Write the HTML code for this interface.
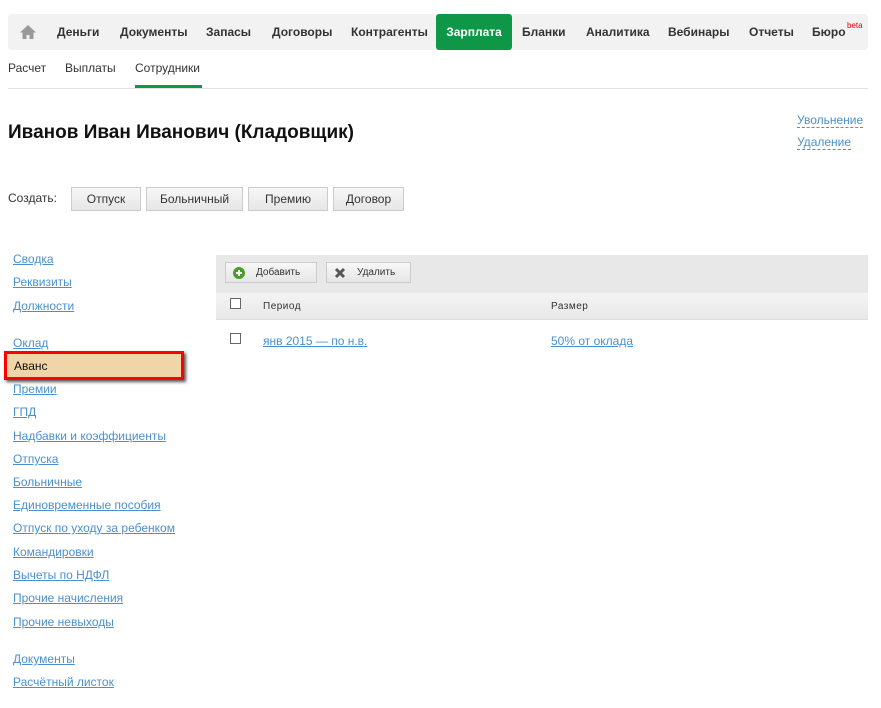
<!DOCTYPE html>
<html><head><meta charset="utf-8"><style>
*{margin:0;padding:0;box-sizing:border-box}
body{width:881px;height:708px;background:#fff;font-family:"Liberation Sans",sans-serif;position:relative;overflow:hidden;color:#222}
.a{position:absolute}
.nav{left:8px;top:14px;width:860px;height:36px;background:#f2f2f2;border-radius:3px}
.nav span{position:absolute;top:11px;font-size:12px;font-weight:bold;color:#333;white-space:nowrap}
.green{left:436px;top:14px;width:76px;height:36px;background:#0f9748;border-radius:3px;color:#fff;font-weight:bold;font-size:12px;text-align:center;line-height:37px}
.sub{font-size:12px;color:#333;top:61px}
.lnk{font-size:12px;color:#4a90d0;text-decoration:underline;position:absolute;left:13px;white-space:nowrap}
.btn{position:absolute;top:187px;height:24px;background:linear-gradient(#f7f7f7,#e6e6e6);border:1px solid #ccc;font-size:12px;color:#333;text-align:center;line-height:22px}
.dash{position:absolute;font-size:12px;color:#4a90d0;border-bottom:1px dashed #4a90d0;line-height:14px}
.cb{position:absolute;width:11px;height:11px;border:1px solid #666;background:#fff}
</style></head><body>
<div class="a nav">
<svg style="position:absolute;left:11px;top:10px" width="18" height="16" viewBox="0 0 18 16"><path d="M9 1L1 8.5h2.5V15h4v-4h3v4h4V8.5H17z" fill="#999"/></svg>
<span style="left:49px">Деньги</span>
<span style="left:112px">Документы</span>
<span style="left:198px">Запасы</span>
<span style="left:264px">Договоры</span>
<span style="left:343px">Контрагенты</span>
<span style="left:514px">Бланки</span>
<span style="left:578px">Аналитика</span>
<span style="left:660px">Вебинары</span>
<span style="left:741px">Отчеты</span>
<span style="left:804px">Бюро</span>
<span style="left:839px;top:7px;font-size:8px;color:#e00;font-weight:normal">beta</span>
</div>
<div class="a green">Зарплата</div>
<div class="a sub" style="left:8px">Расчет</div>
<div class="a sub" style="left:65px">Выплаты</div>
<div class="a sub" style="left:135px">Сотрудники</div>
<div class="a" style="left:8px;top:88px;width:860px;height:1px;background:#e2e2e2"></div>
<div class="a" style="left:135px;top:85px;width:67px;height:3px;background:#0f9748"></div>
<div class="a" style="left:8px;top:122px;font-size:19px;font-weight:bold;color:#111">Иванов Иван Иванович (Кладовщик)</div>
<div class="dash" style="left:797px;top:113px">Увольнение</div>
<div class="dash" style="left:797px;top:135px">Удаление</div>
<div class="a" style="left:8px;top:191px;font-size:12px;color:#333">Создать:</div>
<div class="btn" style="left:71px;width:70px">Отпуск</div>
<div class="btn" style="left:146px;width:97px">Больничный</div>
<div class="btn" style="left:248px;width:80px">Премию</div>
<div class="btn" style="left:333px;width:71px">Договор</div>
<a class="lnk" style="top:252px">Сводка</a>
<a class="lnk" style="top:275px">Реквизиты</a>
<a class="lnk" style="top:299px">Должности</a>
<a class="lnk" style="top:336px">Оклад</a>
<a class="lnk" style="top:382px">Премии</a>
<a class="lnk" style="top:405px">ГПД</a>
<a class="lnk" style="top:429px">Надбавки и коэффициенты</a>
<a class="lnk" style="top:452px">Отпуска</a>
<a class="lnk" style="top:475px">Больничные</a>
<a class="lnk" style="top:498px">Единовременные пособия</a>
<a class="lnk" style="top:521px">Отпуск по уходу за ребенком</a>
<a class="lnk" style="top:545px">Командировки</a>
<a class="lnk" style="top:568px">Вычеты по НДФЛ</a>
<a class="lnk" style="top:591px">Прочие начисления</a>
<a class="lnk" style="top:615px">Прочие невыходы</a>
<a class="lnk" style="top:652px">Документы</a>
<a class="lnk" style="top:675px">Расчётный листок</a>
<div class="a" style="left:4px;top:351px;width:180px;height:29px;border:3px solid #f00;background:#f0d5a8;box-shadow:2px 2px 3px #555;font-size:12px;color:#111;padding:5px 0 0 7px">Аванс</div>
<div class="a" style="left:216px;top:255px;width:652px;height:38px;background:#e8e8e8"></div>
<div class="a btn" style="left:225px;top:262px;width:92px;height:21px;font-size:10px;line-height:19px;text-align:left;padding-left:30px">Добавить
<svg style="position:absolute;left:7px;top:4px" width="12" height="12"><circle cx="6" cy="6" r="6" fill="#4a9e2a"/><path d="M6 3v6M3 6h6" stroke="#fff" stroke-width="2"/></svg></div>
<div class="a btn" style="left:326px;top:262px;width:85px;height:21px;font-size:10px;line-height:19px;text-align:left;padding-left:30px">Удалить
<svg style="position:absolute;left:7px;top:4px" width="12" height="12"><path d="M2 2l8 8M10 2l-8 8" stroke="#555" stroke-width="3"/></svg></div>
<div class="a" style="left:216px;top:293px;width:652px;height:27px;background:linear-gradient(#f4f4f4,#e8e8e8);border-bottom:1px solid #ddd"></div>
<div class="cb" style="left:230px;top:298px"></div>
<div class="a" style="left:263px;top:301px;font-size:10px;color:#333;letter-spacing:.5px">Период</div>
<div class="a" style="left:551px;top:301px;font-size:10px;color:#333;letter-spacing:.5px">Размер</div>
<div class="cb" style="left:230px;top:333px"></div>
<a class="lnk" style="left:263px;top:334px">янв 2015 — по н.в.</a>
<a class="lnk" style="left:551px;top:334px">50% от оклада</a>
</body></html>
